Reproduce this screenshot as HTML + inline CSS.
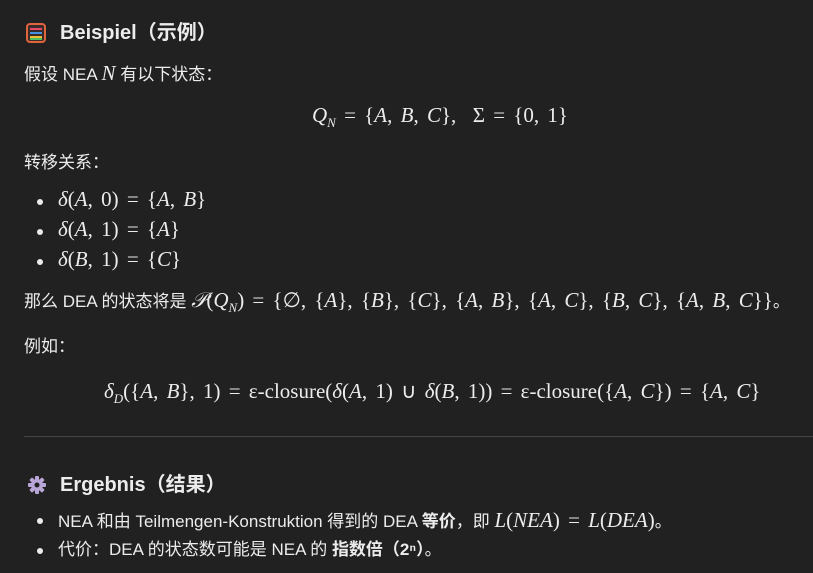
<!DOCTYPE html>
<html><head><meta charset="utf-8"><style>
body{margin:0;width:813px;height:573px;background:#212121;color:#ececec;font-family:"Liberation Sans","Noto Sans CJK SC",sans-serif;font-size:17px;position:relative;overflow:hidden}
.l{position:absolute;white-space:nowrap;line-height:20px}
.m{font-family:"Liberation Serif",serif;font-size:21px;word-spacing:3px}
i{font-family:"Liberation Serif",serif;font-style:italic}
.h{font-weight:bold;font-size:20px}
.b{position:absolute;width:6px;height:6px;border-radius:50%;background:#ececec}
hr{position:absolute;left:24px;right:0;top:436px;margin:0;border:0;border-top:1px solid #444}
sub{font-size:13px}
</style></head><body>
<div class="l" style="left:26px;top:23px"><svg width="20" height="20" viewBox="0 0 20 20"><rect x="1" y="1" width="18" height="18" rx="3" fill="#3a2a2a" stroke="#e0643c" stroke-width="2"/><rect x="4" y="5" width="12" height="2" fill="#e84a6a"/><rect x="4" y="9" width="12" height="2" fill="#4a90e0"/><rect x="4" y="13" width="12" height="2" fill="#f0c030"/><rect x="4" y="15" width="12" height="2" fill="#50c060"/></svg></div>
<div class="l h" style="left:60px;top:23px">Beispiel（示例）</div>
<div class="l" style="left:24px;top:63px">假设 NEA <i style="font-size:21px">N</i> 有以下状态：</div>
<div class="l m" style="left:312px;top:105px"><i>Q<sub>N</sub></i> = {<i>A</i>, <i>B</i>, <i>C</i>}, &nbsp;Σ = {0, 1}</div>
<div class="l" style="left:24px;top:153px">转移关系：</div>
<div class="b" style="left:37px;top:199px"></div><div class="l m" style="left:58px;top:189px"><i>δ</i>(<i>A</i>, 0) = {<i>A</i>, <i>B</i>}</div>
<div class="b" style="left:37px;top:229px"></div><div class="l m" style="left:58px;top:219px"><i>δ</i>(<i>A</i>, 1) = {<i>A</i>}</div>
<div class="b" style="left:37px;top:259px"></div><div class="l m" style="left:58px;top:249px"><i>δ</i>(<i>B</i>, 1) = {<i>C</i>}</div>
<div class="l" style="left:24px;top:290px">那么 DEA 的状态将是 <span class="m"><i>𝒫</i>(<i>Q<sub>N</sub></i>) = {∅, {<i>A</i>}, {<i>B</i>}, {<i>C</i>}, {<i>A</i>, <i>B</i>}, {<i>A</i>, <i>C</i>}, {<i>B</i>, <i>C</i>}, {<i>A</i>, <i>B</i>, <i>C</i>}}</span>。</div>
<div class="l" style="left:24px;top:337px">例如：</div>
<div class="l m" style="left:104px;top:381px"><i>δ<sub>D</sub></i>({<i>A</i>, <i>B</i>}, 1) = ε-closure(<i>δ</i>(<i>A</i>, 1) ∪ <i>δ</i>(<i>B</i>, 1)) = ε-closure({<i>A</i>, <i>C</i>}) = {<i>A</i>, <i>C</i>}</div>
<hr>
<div class="l" style="left:27px;top:475px"><svg width="20" height="20" viewBox="0 0 20 20"><g fill="#b9a6d6"><circle cx="10" cy="10" r="6"/><g id="t"><rect x="8" y="1" width="4" height="18" rx="1"/></g><use href="#t" transform="rotate(45 10 10)"/><use href="#t" transform="rotate(90 10 10)"/><use href="#t" transform="rotate(135 10 10)"/></g><circle cx="10" cy="10" r="2.5" fill="#212121"/></svg></div>
<div class="l h" style="left:60px;top:475px">Ergebnis（结果）</div>
<div class="b" style="left:37px;top:518px"></div><div class="l" style="left:58px;top:510px">NEA 和由 Teilmengen-Konstruktion 得到的 DEA <b>等价</b>，即 <span class="m"><i>L</i>(<i>NEA</i>) = <i>L</i>(<i>DEA</i>)</span>。</div>
<div class="b" style="left:37px;top:548px"></div><div class="l" style="left:58px;top:540px">代价：DEA 的状态数可能是 NEA 的 <b>指数倍（2ⁿ）</b>。</div>
</body></html>
